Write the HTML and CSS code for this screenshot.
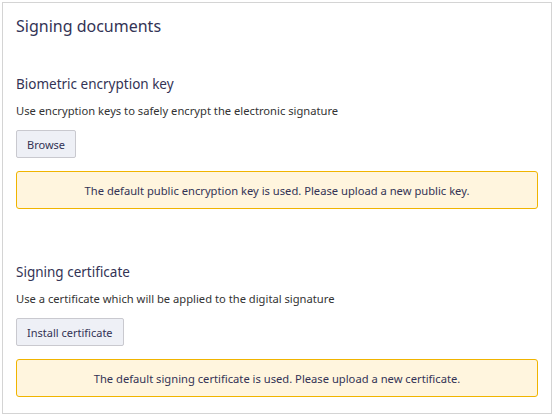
FILE: index.html
```html
<!DOCTYPE html>
<html>
<head>
<meta charset="utf-8">
<link rel="stylesheet" href="styles.css">
</head>
<body>
<div class="card">
  <h1 class="title">Signing documents</h1>
  <section class="section first">
    <h2 class="heading">Biometric encryption key</h2>
    <p class="desc">Use encryption keys to safely encrypt the electronic signature</p>
    <button class="btn">Browse</button>
    <div class="alert">The default public encryption key is used. Please upload a new public key.</div>
  </section>
  <section class="section second">
    <h2 class="heading">Signing certificate</h2>
    <p class="desc">Use a certificate which will be applied to the digital signature</p>
    <button class="btn">Install certificate</button>
    <div class="alert">The default signing certificate is used. Please upload a new certificate.</div>
  </section>
</div>
</body>
</html>
```

FILE: styles.css
```css
html, body { margin: 0; padding: 0; background: #fff; }
body { font-family: "Noto Sans", "Open Sans", sans-serif; color: #3a3a4a; }
.card {
  margin: 2px 0 0 2px;
  width: 550px;
  height: 412px;
  box-sizing: border-box;
  border: 1px solid #d4d4d4;
  padding: 0 13px 0 13px;
}
.title {
  margin: 11px 0 0 0;
  font-size: 16px;
  font-weight: 400;
  line-height: 24px;
  color: #333355;
}
.section.first { margin-top: 36px; }
.section.second { margin-top: 53px; }
.heading {
  margin: 0;
  font-size: 13.5px;
  font-weight: 400;
  line-height: 20px;
  color: #333355;
}
.desc {
  margin: 9px 0 0 0;
  font-size: 11.2px;
  line-height: 16px;
  color: #333;
}
.btn {
  margin-top: 11px;
  display: block;
  height: 28px;
  padding: 0 10px;
  font-family: inherit;
  font-size: 11px;
  color: #333355;
  background: #eef0f6;
  border: 1px solid #c9c9cf;
  border-radius: 2px;
}
.alert {
  margin-top: 13px;
  height: 38px;
  box-sizing: border-box;
  border: 1px solid #f0b400;
  border-radius: 3px;
  background: #fff5de;
  display: flex;
  align-items: center;
  justify-content: center;
  font-size: 11.2px;
  color: #333355;
}
```
